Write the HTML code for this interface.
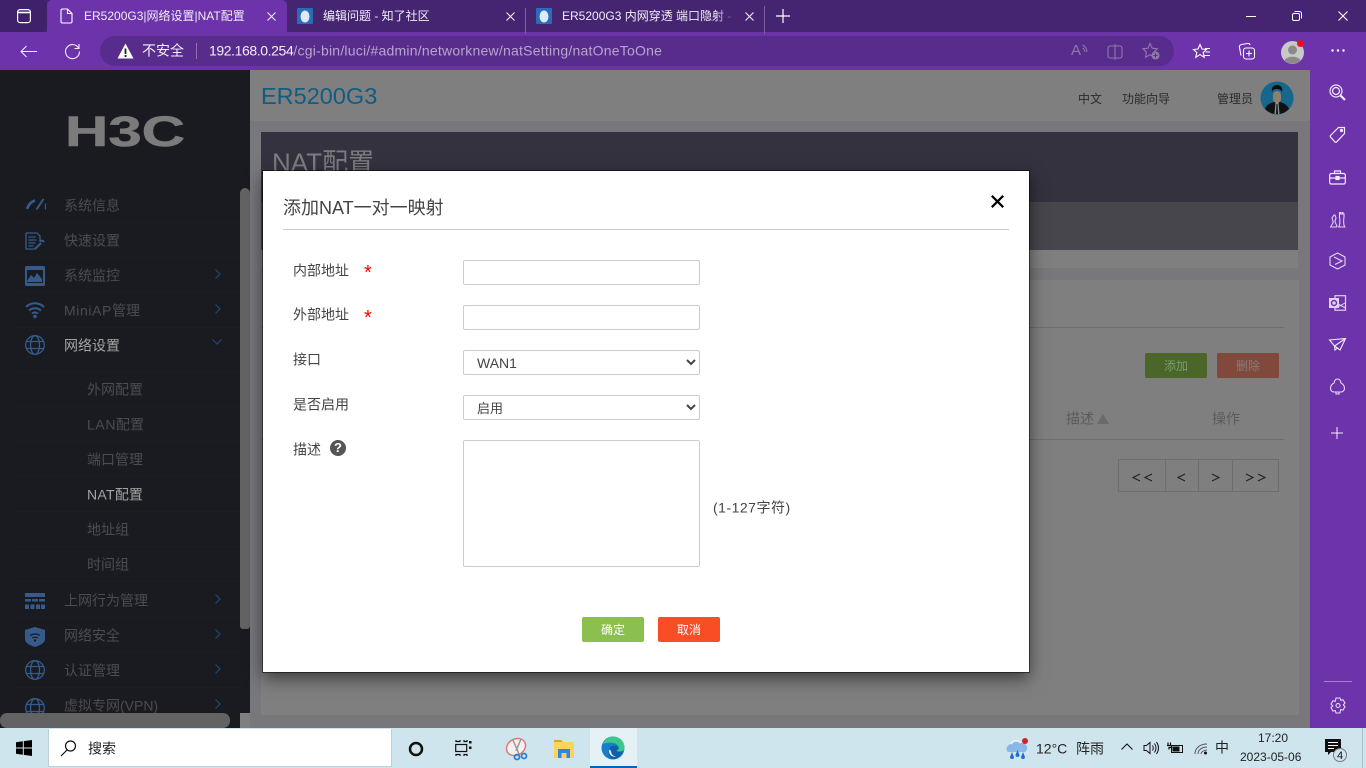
<!DOCTYPE html>
<html lang="zh"><head><meta charset="utf-8"><title>ER5200G3|网络设置|NAT配置</title>
<style>
*{box-sizing:border-box}
html,body{margin:0;padding:0;width:1366px;height:768px;overflow:hidden;background:#77777c;font-family:"Liberation Sans","Noto Sans CJK SC",sans-serif}
.a{position:absolute}
.t{position:absolute;white-space:nowrap;transform:translateY(calc(-50% + 1px));line-height:1.2}
svg{position:absolute;overflow:visible;fill:none}
.m{font-size:14px;color:#4b4c50}
.l{font-size:14px;color:#444}
.tab{font-size:12px;color:#f1ecf6}
.f{position:absolute;left:463px;width:237px;height:25px;border:1px solid #ccc;border-radius:2px;background:#fff;margin:0;outline:0}
select.f{font-family:"Liberation Sans","Noto Sans CJK SC",sans-serif;color:#444;padding-left:9px}
.sep{position:absolute;left:15px;width:225px;height:1px;background:#1d1e23}
</style></head><body>

<!-- Browser chrome -->
<div class="a" style="left:0;top:0;width:1366px;height:32px;background:#452572"></div>
<div class="a" style="left:0;top:32px;width:1366px;height:38px;background:#6d33ab"></div>
<div class="a" style="left:47px;top:0;width:240px;height:32px;background:#6d33ab;border-radius:5px 5px 0 0"></div>
<div class="a" style="left:0;top:0;width:47px;height:32px;background:#3f2169;border-radius:0 5px 5px 0"></div>
<svg style="left:17px;top:9px" width="14" height="14" stroke="#fff" stroke-width="1.200"><rect x=".6" y=".6" width="12.800" height="13" rx="2.500"/><path d="M1 3.500h12" stroke-width="1.600"/></svg>
<svg style="left:60px;top:8px" width="13" height="16" stroke="#fff" stroke-width="1.100"><path d="M1 2.500a1.500 1.500 0 0 1 1.500-1.500h5L12 5.500v8a1.500 1.500 0 0 1-1.500 1.500h-8A1.500 1.500 0 0 1 1 13.500zM7.500 1v4.500H12"/></svg>
<div class="t tab" style="left:84px;top:15px">ER5200G3|网络设置|NAT配置</div>
<svg style="left:267px;top:12px" width="9" height="9" stroke="#f1ecf6" stroke-width="1.100"><path d="M.5.500l8 8M8.500.500l-8 8"/></svg>
<svg style="left:297px;top:8px" width="16" height="16"><rect width="16" height="16" rx="1" fill="#2a6cb8"/><ellipse cx="8" cy="8.500" rx="4.500" ry="6" fill="#dce9f6"/></svg>
<div class="t tab" style="left:323px;top:15px">编辑问题 - 知了社区</div>
<svg style="left:506px;top:12px" width="9" height="9" stroke="#f1ecf6" stroke-width="1.100"><path d="M.5.500l8 8M8.500.500l-8 8"/></svg>
<div class="a" style="left:525px;top:8px;width:1px;height:26px;background:#7a639c"></div>
<svg style="left:536px;top:8px" width="16" height="16"><rect width="16" height="16" rx="1" fill="#2a6cb8"/><ellipse cx="8" cy="8.500" rx="4.500" ry="6" fill="#dce9f6"/></svg>
<div class="t tab" style="left:562px;top:15px;width:174px;overflow:hidden">ER5200G3 内网穿透 端口隐射 - 知了社区</div>
<div class="a" style="left:716px;top:6px;width:22px;height:22px;background:linear-gradient(90deg,rgba(69,37,114,0),#452572 85%)"></div>
<svg style="left:745px;top:12px" width="9" height="9" stroke="#f1ecf6" stroke-width="1.100"><path d="M.5.500l8 8M8.500.500l-8 8"/></svg>
<div class="a" style="left:764px;top:6px;width:1px;height:28px;background:#7a639c"></div>
<svg style="left:776px;top:9px" width="14" height="14" stroke="#fff" stroke-width="1.200"><path d="M7 0v14M0 7h14"/></svg>
<svg style="left:1246px;top:16px" width="10" height="2" stroke="#fff"><path d="M0 .5h10"/></svg>
<svg style="left:1292px;top:11px" width="10" height="10" stroke="#fff"><rect x=".5" y="2.500" width="7" height="7" rx="1.500"/><path d="M2.500.500h5a2 2 0 0 1 2 2v5"/></svg>
<svg style="left:1338px;top:11px" width="10" height="10" stroke="#fff" stroke-width="1.100"><path d="M.5.500l9 9M9.500.500l-9 9"/></svg>

<svg style="left:20px;top:45px" width="17" height="13" stroke="#f4eff9" stroke-width="1"><path d="M17 6.500H1M6.500 1L1 6.500 6.500 12"/></svg>
<svg style="left:64px;top:43px" width="17" height="17" stroke="#f4eff9" stroke-width="1.100"><path d="M14.500 5A7 7 0 1 0 15.500 8.500M15 1v4.500h-4.500"/></svg>
<div class="a" style="left:100px;top:36px;width:1074px;height:30px;border-radius:15px;background:#582c8c"></div>
<svg style="left:117px;top:43px" width="17" height="16"><path d="M8.500 0.500L16.500 15.500H.5z" fill="#fff"/><path d="M8.500 5.500v5.500M8.500 12v2" stroke="#222" stroke-width="1.800"/></svg>
<div class="t" style="left:142px;top:50px;font-size:14px;color:#f4eff9">不安全</div>
<div class="a" style="left:196px;top:43px;width:1px;height:16px;background:#8d70ad"></div>
<div class="t" style="left:209px;top:50px;font-size:14px;color:#f4eff9;letter-spacing:-.4px">192.168.0.254<span style="color:#b7a6cc;letter-spacing:.23px">/cgi-bin/luci/#admin/networknew/natSetting/natOneToOne</span></div>
<div class="t" style="left:1071px;top:50px;font-size:15px;color:#8d7aa6">A</div>
<svg style="left:1082px;top:44px" width="6" height="9" stroke="#8d7aa6"><path d="M.5 1C3 2 4.500 4 5 8M.5 4C2 4.500 2.500 6 3 8"/></svg>
<svg style="left:1107px;top:44px" width="16" height="16" stroke="#8d7aa6" stroke-width="1.100"><rect x="1" y="2" width="14" height="12" rx="2"/><path d="M8 0v16"/></svg>
<svg style="left:1142px;top:42px" width="18" height="18" stroke="#8d7aa6" stroke-width="1.100"><path d="M8 1.500l2.200 4.700 5 .6-3.700 3.500 1 5-4.500-2.500-4.500 2.500 1-5L1 6.800l5-.6z"/><circle cx="13.500" cy="13.500" r="4" fill="#8d7aa6" stroke="none"/><path d="M13.500 11.500v4M11.500 13.500h4" stroke="#582c8c"/></svg>
<svg style="left:1193px;top:43px" width="18" height="17" stroke="#fff" stroke-width="1.100"><path d="M7 1.500l2 4.500 4.500.5-3.300 3 1 4.800L7 11.500l-4.200 2.800 1-4.800L.5 6.500 5 6zM12 5.500h5M12.500 9h4.500M11.500 12.500h5.500"/></svg>
<svg style="left:1238px;top:42px" width="18" height="18" stroke="#fff" stroke-width="1.100"><path d="M3 13.500L1.500 5.500Q1 3 3.500 2.500l6-1Q11.500 1 12 3"/><rect x="5.500" y="6" width="11" height="11" rx="2.500"/><path d="M11 8.500v6M8 11.500h6"/></svg>
<svg style="left:1281px;top:39px" width="25" height="25"><circle cx="11.500" cy="13.500" r="11.500" fill="#c8c8c8"/><circle cx="11.500" cy="11" r="4.500" fill="#8a8a86"/><path d="M3.500 21.500c2-5 14-5 16 0a11.500 11.500 0 0 1-16 0z" fill="#8a8a86"/><circle cx="19.500" cy="4.500" r="3.500" fill="#e81123"/></svg>
<svg style="left:1331px;top:49px" width="14" height="3"><circle cx="1.500" cy="1.500" r="1.200" fill="#fff"/><circle cx="7" cy="1.500" r="1.200" fill="#fff"/><circle cx="12.500" cy="1.500" r="1.200" fill="#fff"/></svg>

<!-- Main page dimmed -->
<div class="a" style="left:250px;top:70px;width:1060px;height:658px;background:#77777c"></div>
<div class="a" style="left:250px;top:70px;width:1060px;height:51px;background:#7f7f7f"></div>
<div class="t" style="left:261px;top:95px;font-size:23.500px;color:#105d83">ER5200G3</div>
<div class="t" style="left:1078px;top:98px;font-size:12px;color:#2b2b2b">中文</div>
<div class="t" style="left:1122px;top:98px;font-size:12px;color:#2b2b2b">功能向导</div>
<div class="t" style="left:1217px;top:98px;font-size:12px;color:#2b2b2b">管理员</div>
<svg style="left:1260px;top:81px" width="34" height="34"><circle cx="17" cy="17" r="16.500" fill="#17668c"/><path d="M5 28c2-5 6-6 9-7h6c3 1 7 2 9 7a16.500 16.500 0 0 1-24 0z" fill="#111"/><rect x="13" y="10" width="8" height="12" rx="4" fill="#8d8069"/><path d="M12 11c-1-5 2-7 5-7s6 2 5 7c-1-2-2-3-5-3s-4 1-5 3z" fill="#0c0c0c"/><path d="M15.500 21h3l1 12h-5z" fill="#8f8f8f"/><path d="M16.500 23h1l.5 10h-2z" fill="#111"/></svg>

<div class="a" style="left:261px;top:132px;width:1037px;height:70px;background:#33323e"></div>
<div class="a" style="left:261px;top:202px;width:1037px;height:48px;background:#47464c"></div>
<div class="a" style="left:261px;top:250px;width:1037px;height:18px;background:#7f7f7f"></div>
<div class="t" style="left:272px;top:162px;font-size:26px;color:#7d7c80">NAT配置</div>

<div class="a" style="left:261px;top:280px;width:1038px;height:435px;background:#7f7f7f"></div>
<div class="a" style="left:261px;top:327px;width:1023px;height:1px;background:#6e6e6e"></div>
<div class="a" style="left:261px;top:439px;width:1023px;height:1px;background:#6e6e6e"></div>
<div class="a" style="left:1145px;top:353px;width:62px;height:25px;background:#4a6629;border-radius:2px"></div>
<div class="t" style="left:1164px;top:365px;font-size:12px;color:#7f9a6f">添加</div>
<div class="a" style="left:1217px;top:353px;width:62px;height:25px;background:#80493c;border-radius:2px"></div>
<div class="t" style="left:1236px;top:365px;font-size:12px;color:#8a7a78">删除</div>
<div class="t" style="left:1066px;top:418px;font-size:14px;color:#5b5b5b">描述</div>
<svg style="left:1097px;top:414px" width="12" height="10"><path d="M6 0l6 10H0z" fill="#6a6a6a"/></svg>
<div class="t" style="left:1212px;top:418px;font-size:14px;color:#5b5b5b">操作</div>
<div class="a" style="left:1118px;top:459px;width:161px;height:33px;border:1px solid #6e6e6e"></div>
<div class="a" style="left:1165px;top:459px;width:1px;height:33px;background:#6e6e6e"></div>
<div class="a" style="left:1198px;top:459px;width:1px;height:33px;background:#6e6e6e"></div>
<div class="a" style="left:1232px;top:459px;width:1px;height:33px;background:#6e6e6e"></div>
<svg style="left:1132px;top:473px" width="140" height="9" stroke="#222" stroke-width="1.100"><path d="M8 1L1 4.500 8 8M20 1L13 4.500 20 8M53 1L46 4.500 53 8M80 1l7 3.500L80 8M114 1l7 3.500L114 8M126 1l7 3.500L126 8"/></svg>

<!-- Left sidebar -->
<div class="a" style="left:0;top:70px;width:250px;height:658px;background:#1a1b20;overflow:hidden">
<svg style="left:65px;top:46px" width="120" height="30"><text x="0" y="30" font-family="Liberation Sans" font-weight="700" font-size="43" fill="#7b7b7b" stroke="#7b7b7b" stroke-width=".6" textLength="120" lengthAdjust="spacingAndGlyphs">H3C</text></svg>
</div>
<div class="a" style="left:240px;top:188px;width:10px;height:441px;background:#636363;border-radius:5px 5px 3px 3px"></div>
<div class="a" style="left:240px;top:713px;width:10px;height:15px;background:#7f7f7f"></div>
<div class="sep" style="top:222px"></div><div class="sep" style="top:257px"></div><div class="sep" style="top:292px"></div><div class="sep" style="top:327px"></div><div class="sep" style="top:371px"></div><div class="sep" style="top:406px"></div><div class="sep" style="top:441px"></div><div class="sep" style="top:476px"></div><div class="sep" style="top:511px"></div><div class="sep" style="top:546px"></div><div class="sep" style="top:581px"></div><div class="sep" style="top:617px"></div><div class="sep" style="top:652px"></div><div class="sep" style="top:687px"></div>

<div class="t m" style="left:64px;top:205px">系统信息</div>
<div class="t m" style="left:64px;top:240px">快速设置</div>
<div class="t m" style="left:64px;top:275px">系统监控</div>
<div class="t m" style="left:64px;top:310px"><span style="letter-spacing:.6px">MiniAP</span>管理</div>
<div class="t m" style="left:64px;top:345px;color:#a4a4a4">网络设置</div>
<div class="t m" style="left:87px;top:389px">外网配置</div>
<div class="t m" style="left:87px;top:424px"><span style="letter-spacing:.6px">LAN</span>配置</div>
<div class="t m" style="left:87px;top:459px">端口管理</div>
<div class="t m" style="left:87px;top:494px;color:#a4a4a4"><span style="letter-spacing:.3px">NAT</span>配置</div>
<div class="t m" style="left:87px;top:529px">地址组</div>
<div class="t m" style="left:87px;top:564px">时间组</div>
<div class="t m" style="left:64px;top:600px">上网行为管理</div>
<div class="t m" style="left:64px;top:635px">网络安全</div>
<div class="t m" style="left:64px;top:670px">认证管理</div>
<div class="t m" style="left:64px;top:705px">虚拟专网(VPN)</div>

<svg style="left:215px;top:269px" width="6" height="10" stroke="#1d4a7a" stroke-width="1.200"><path d="M.5.500L5 5 .5 9.500"/></svg>
<svg style="left:215px;top:304px" width="6" height="10" stroke="#1d4a7a" stroke-width="1.200"><path d="M.5.500L5 5 .5 9.500"/></svg>
<svg style="left:212px;top:339px" width="10" height="6" stroke="#1d4a7a" stroke-width="1.200"><path d="M.5.500L5 5 9.500.5"/></svg>
<svg style="left:215px;top:594px" width="6" height="10" stroke="#1d4a7a" stroke-width="1.200"><path d="M.5.500L5 5 .5 9.500"/></svg>
<svg style="left:215px;top:629px" width="6" height="10" stroke="#1d4a7a" stroke-width="1.200"><path d="M.5.500L5 5 .5 9.500"/></svg>
<svg style="left:215px;top:664px" width="6" height="10" stroke="#1d4a7a" stroke-width="1.200"><path d="M.5.500L5 5 .5 9.500"/></svg>
<svg style="left:215px;top:699px" width="6" height="10" stroke="#1d4a7a" stroke-width="1.200"><path d="M.5.500L5 5 .5 9.500"/></svg>

<svg style="left:26px;top:197px" width="21" height="14" stroke="#365b8b"><path d="M1.200 12C2 8 5 5 9 3.500" stroke-width="2.600"/><path d="M10.500 12.500L17.500 2" stroke-width="2"/><path d="M19.500 6.500v6" stroke-width="1.200"/></svg>
<svg style="left:25px;top:232px" width="21" height="19" stroke="#365b8b" stroke-width="1.300"><path d="M1 1h11l3 3v6M1 1v16h9"/><path d="M3.500 5h7M3.500 8h8M3.500 11h7M3.500 14h5" stroke-width="1.200"/><path d="M10 17l6-6M15 9a3 3 0 0 1 4 1" stroke-width="2"/></svg>
<svg style="left:25px;top:266px" width="20" height="20"><rect width="20" height="20" rx="1.500" fill="#365b8b"/><rect x="2" y="4" width="16" height="13" fill="#1a1b20"/><path d="M2 15l4-6 3 3 3-5 5 6v3H2z" fill="#365b8b"/></svg>
<svg style="left:25px;top:302px" width="20" height="16" stroke="#365b8b" stroke-width="2"><path d="M1 5c5-5 13-5 18 0M4 8.500c3.500-3 8.500-3 12 0M7 11.500c2-1.500 4-1.500 6 0"/><circle cx="10" cy="14.500" r="1.800" fill="#365b8b" stroke="none"/></svg>
<svg style="left:25px;top:335px" width="20" height="20" stroke="#365b8b" stroke-width="1.300"><circle cx="10" cy="10" r="9.300"/><ellipse cx="10" cy="10" rx="4.500" ry="9.300"/><path d="M1.500 6.500h17M1.500 13.500h17"/></svg>
<svg style="left:25px;top:593px" width="20" height="16"><rect width="20" height="4" fill="#365b8b"/><rect y="6" width="6" height="2.500" fill="#365b8b"/><rect x="7" y="6" width="6" height="2.500" fill="#365b8b"/><rect x="14" y="6" width="6" height="2.500" fill="#365b8b"/><rect y="11.500" width="4" height="4.500" fill="#365b8b"/><rect x="5.500" y="11.500" width="4" height="4.500" fill="#365b8b"/><rect x="11" y="11.500" width="4" height="4.500" fill="#365b8b"/><rect x="16" y="11.500" width="4" height="4.500" fill="#365b8b"/></svg>
<svg style="left:25px;top:627px" width="20" height="20"><path d="M10 0l10 3v9c0 4-5 6.500-10 8C5 18.500 0 16 0 12V3z" fill="#365b8b"/><path d="M5 8.500c3-2 7-2 10 0M7 11c2-1 4-1 6 0" stroke="#1a1b20" stroke-width="1.200"/><circle cx="10" cy="13.500" r="1.200" fill="#1a1b20"/></svg>
<svg style="left:25px;top:660px" width="20" height="20" stroke="#365b8b" stroke-width="1.300"><circle cx="10" cy="10" r="9.300"/><ellipse cx="10" cy="10" rx="4.500" ry="9.300"/><path d="M1.500 6.500h17M1.500 13.500h17"/></svg>
<svg style="left:25px;top:698px" width="20" height="20" stroke="#365b8b" stroke-width="1.300"><circle cx="10" cy="10" r="9.300"/><ellipse cx="10" cy="10" rx="4.500" ry="9.300"/><path d="M1.500 6.500h17M1.500 13.500h17"/></svg>

<div class="a" style="left:0;top:713px;width:230px;height:15px;background:#636363;border-radius:7px"></div>

<!-- Edge sidebar -->
<div class="a" style="left:1310px;top:70px;width:56px;height:658px;background:#6d33ab"></div>
<svg style="left:1329px;top:84px" width="17" height="17" stroke="#f3ecfa" stroke-width="1.200"><circle cx="7" cy="7" r="6"/><circle cx="7" cy="7" r="3.500"/><path d="M11.500 11.500l4.500 4.500" stroke-width="2.200"/></svg>
<svg style="left:1329px;top:126px" width="17" height="17" stroke="#f3ecfa" stroke-width="1.200"><path d="M1.500 9.500L9.500 1.500h6v6l-8 8.500q-.7.500-1.500 0L1.500 11q-.5-.7 0-1.500z"/><circle cx="12.500" cy="4.500" r="1" fill="#f3ecfa"/></svg>
<svg style="left:1329px;top:170px" width="17" height="15" stroke="#f3ecfa" stroke-width="1.200"><rect x=".7" y="3.500" width="15.600" height="10.500" rx="1.500"/><path d="M5.500 3.500V1h6v2.500M.7 8h15.600"/><rect x="7" y="6.500" width="3" height="3" fill="#f3ecfa"/></svg>
<svg style="left:1329px;top:211px" width="17" height="17" stroke="#e2d3f3" stroke-width="1.100"><path d="M1 16h7M2 16c0-3 3-3 2-6L3 7l2-3h1l1 3-1 3c0 3 2 3 2 6M9 16h7.500M10 16c1-3 1-7 .5-10V1.500h1v1.500h1.500V1.500h1V3h1v3c-.5 3-.5 7 .5 10"/></svg>
<svg style="left:1329px;top:252px" width="17" height="18" stroke="#e6daf5" stroke-width="1.100"><path d="M8.500 1l7.500 4v8l-7.500 4L1 13V5zM5 5l8 4-7 3.500"/></svg>
<svg style="left:1329px;top:295px" width="17" height="16"><rect x="6" y="0.700" width="10.500" height="14.500" stroke="#e2d3f3" stroke-width="1.200"/><path d="M7 8l9.500 5M7 13l9-5" stroke="#e2d3f3"/><rect x="0" y="3" width="10" height="10" fill="#e2d3f3"/><circle cx="5" cy="8" r="2.500" stroke="#6d33ab" stroke-width="1.500"/></svg>
<svg style="left:1329px;top:338px" width="17" height="13" stroke="#f3ecfa" stroke-width="1.100"><path d="M0.500 2L16.500.5 11 12 5.500 8zM16.500.5L5.500 8l.5 4 3-2.500"/></svg>
<svg style="left:1330px;top:378px" width="15" height="17" stroke="#e6daf5" stroke-width="1.100"><path d="M7.500 1C5 1 4.500 3 4 5 2 6 .5 8 .5 10.500c0 2 1.500 3.500 3.500 3.500h7c2 0 3.500-1.500 3.500-3.500 0-2.500-1.500-4.500-3.500-5.500-.5-2-1-4-3.500-4zM6 14v2h3v-2"/></svg>
<svg style="left:1331px;top:427px" width="12" height="12" stroke="#f3ecfa"><path d="M6 0v12M0 6h12"/></svg>
<div class="a" style="left:1324px;top:681px;width:28px;height:1px;background:#a27fd0"></div>
<svg style="left:1330px;top:697px" width="16" height="17" stroke="#e6daf5" stroke-width="1.100"><path d="M6 1h4l.7 2.300 2.300-.6 2 3.400-1.700 1.800 1.700 1.800-2 3.400-2.300-.6L10 16H6l-.7-2.500-2.300.6-2-3.400 1.700-1.800L1 7.100l2-3.400 2.300.6z"/><circle cx="8" cy="8.500" r="2"/></svg>

<!-- Modal -->
<div class="a" style="left:263px;top:171px;width:766px;height:501px;background:#fff;box-shadow:0 6px 16px rgba(0,0,0,.55);outline:1px solid rgba(0,0,0,.5)">
</div>
<div class="t" style="left:283px;top:208px;font-size:18px;color:#444">添加NAT一对一映射</div>
<svg style="left:991px;top:195px" width="13" height="13" stroke="#000" stroke-width="2.200"><path d="M.8.800l11.400 11.400M12.200.800L.8 12.200"/></svg>
<div class="a" style="left:283px;top:229px;width:726px;height:1px;background:#ccc"></div>

<div class="t l" style="left:293px;top:270px">内部地址</div>
<div class="t" style="left:364px;top:272px;font-size:20px;color:#f00">*</div>
<div class="t l" style="left:293px;top:314px">外部地址</div>
<div class="t" style="left:364px;top:317px;font-size:20px;color:#f00">*</div>
<div class="t l" style="left:293px;top:359px">接口</div>
<div class="t l" style="left:293px;top:404px">是否启用</div>
<div class="t l" style="left:293px;top:449px">描述</div>
<div class="a" style="left:330px;top:440px;width:16px;height:16px;border-radius:50%;background:#555;color:#fff;font-size:13px;font-weight:700;text-align:center;line-height:16px">?</div>

<input class="f" style="top:260px" type="text">
<input class="f" style="top:305px" type="text">
<select class="f" style="top:350px;font-size:14px"><option>WAN1</option></select>
<select class="f" style="top:395px;font-size:13px;padding-top:2px"><option>启用</option></select>
<div class="f" style="top:440px;height:127px"></div>
<div class="t l" style="left:713px;top:507px;letter-spacing:.5px">(1-127字符)</div>

<div class="a" style="left:582px;top:617px;width:62px;height:25px;background:#8bc04f;border-radius:2px;color:#fff;font-size:12px;text-align:center;line-height:26px">确定</div>
<div class="a" style="left:658px;top:617px;width:62px;height:25px;background:#f94d26;border-radius:2px;color:#fff;font-size:12px;text-align:center;line-height:26px">取消</div>

<!-- Taskbar -->
<div class="a" style="left:0;top:728px;width:1366px;height:40px;background:#cfe5ee"></div>
<svg style="left:16px;top:740px" width="16" height="16"><path d="M0 2.300l6.800-1v6.200H0zM7.800 1.100L16 0v7.500H7.800zM0 8.500h6.800v6.200l-6.800-1zM7.800 8.500H16V16l-8.200-1.100z" fill="#000"/></svg>
<div class="a" style="left:48px;top:729px;width:344px;height:38px;background:#fff;border:1px solid #bcd0d9;border-width:0 1px 1px 1px"></div>
<svg style="left:60px;top:740px" width="17" height="17" stroke="#111" stroke-width="1.200"><circle cx="10.500" cy="6" r="5"/><path d="M7 10L1 16"/></svg>
<div class="t" style="left:88px;top:748px;font-size:14px;color:#222">搜索</div>
<svg style="left:408px;top:741px" width="16" height="16" stroke="#111" stroke-width="2.500"><ellipse cx="8" cy="8" rx="6" ry="6"/></svg>
<svg style="left:455px;top:740px" width="17" height="16" stroke="#111" stroke-width="1.200"><path d="M1 0v1.500h4V0M1 16v-1.500h4V16M9 0v1.500h3V0M9 16v-1.500h3V16"/><rect x=".7" y="4.500" width="11" height="7"/><rect x="14" y="1" width="2.500" height="2.500" fill="#111" stroke="none"/><rect x="14" y="6.500" width="2.500" height="2.500" fill="#111" stroke="none"/></svg>
<svg style="left:504px;top:736px" width="24" height="26"><ellipse cx="12" cy="11" rx="10" ry="8" transform="rotate(-30 12 11)" stroke="#e07a7a" stroke-width="1.500" fill="#f3f0f0"/><path d="M9 4l6 14M17 3L12 15" stroke="#999" stroke-width="1.500"/><circle cx="13" cy="21" r="2.500" stroke="#2d7fd0" stroke-width="1.800"/><circle cx="20" cy="20" r="2.500" stroke="#2d7fd0" stroke-width="1.800"/></svg>
<svg style="left:554px;top:738px" width="20" height="20"><path d="M0 2h7l2 2h-9z" fill="#e0a526"/><rect y="4" width="20" height="16" fill="#fbd45c"/><rect x="4" y="11" width="12" height="9" fill="#2e88d8"/><rect x="7.500" y="15" width="5" height="5" fill="#fbd45c"/></svg>
<div class="a" style="left:590px;top:728px;width:47px;height:40px;background:#e6f1f6"></div>
<div class="a" style="left:590px;top:766px;width:47px;height:2px;background:#0a64b5"></div>
<svg style="left:601px;top:736px" width="24" height="24"><circle cx="12" cy="12" r="11.500" fill="#1a7dc8"/><path d="M2 8C5 1 12-.5 17 1.500c4 2 7 6 6.500 11-.3 3-5 3.500-8 2.500 3-1 3-4 1-6-3-3-10-3-14.500-1z" fill="#3bc78a"/><path d="M8 14c0-4 6-6 9-3 1 2-1 3-2 3.500 2 2 5 1.500 7 .5-1.500 5-6 8.500-11 8-3-1-4-5-3-9z" fill="#0f5ea8"/><path d="M10 15c0 3 2 5 5 5.500-4 1-7-2-7-5.500 0-.5.200-1 .4-1.500z" fill="#e6f1f6"/></svg>

<svg style="left:1004px;top:736px" width="26" height="25"><path d="M3 15a5 5 0 0 1 4-7 6 6 0 0 1 11-1 5 5 0 0 1 5 6c0 2-2 3-3 3H6c-2 0-3-.5-3-1z" fill="#8ab7e8"/><path d="M7 8a6 6 0 0 1 10-1" stroke="#e8f1fa" stroke-width="2"/><path d="M8 16l-2 5a2 2 0 0 0 4 0zM19 16l-2 5a2 2 0 0 0 4 0z" fill="#1e6fd0"/><path d="M13.500 14l-2 5a2 2 0 0 0 4 0z" fill="#1e6fd0"/><circle cx="21" cy="5" r="3" fill="#d92020"/></svg>
<div class="t" style="left:1036px;top:748px;font-size:14px;color:#222">12°C</div>
<div class="t" style="left:1076px;top:748px;font-size:14px;color:#222">阵雨</div>
<svg style="left:1121px;top:743px" width="12" height="7" stroke="#111" stroke-width="1.100"><path d="M.5 6.500L6 1l5.500 5.500"/></svg>
<svg style="left:1143px;top:741px" width="16" height="14" stroke="#111"><path d="M1 4.500h2.500L7 1.500v11L3.500 9.500H1zM9.500 4.500q1.500 2.500 0 5M11.500 2.500q3 4.500 0 9M13.500 1q4 6 0 12"/></svg>
<svg style="left:1167px;top:741px" width="16" height="14" stroke="#111"><rect x="4.500" y="4.500" width="11" height="7"/><rect x="5.500" y="5.500" width="7" height="5" fill="#111" stroke="none"/><path d="M1 1.500v3M3.500 1.500v3M0 4.500h4.500v2h-2.500v2" stroke-width="1.200"/></svg>
<svg style="left:1194px;top:743px" width="14" height="12" stroke="#555"><path d="M1 11C1 5 6 1 13 1M4 11c0-4 4-7 9-7M7 11c0-2 3-4 6-4"/><circle cx="11.500" cy="10" r="1.500" fill="#111" stroke="none"/></svg>
<div class="t" style="left:1215px;top:747px;font-size:14px;color:#222">中</div>
<div class="t" style="left:1258px;top:737px;font-size:12px;color:#222">17:20</div>
<div class="t" style="left:1240px;top:756px;font-size:12px;color:#222">2023-05-06</div>
<svg style="left:1325px;top:739px" width="24" height="23"><path d="M0 0h16v13H6l-3 3v-3H0z" fill="#111"/><path d="M3 3.500h10M3 6.500h10M3 9.500h6" stroke="#fff"/><circle cx="15" cy="16" r="6.500" fill="#cfe5ee" stroke="#777"/><text x="15" y="20" font-family="Liberation Sans" font-size="11" fill="#111" text-anchor="middle">4</text></svg>
<div class="a" style="left:1362px;top:728px;width:1px;height:40px;background:#a9c0ca"></div>
</body></html>
